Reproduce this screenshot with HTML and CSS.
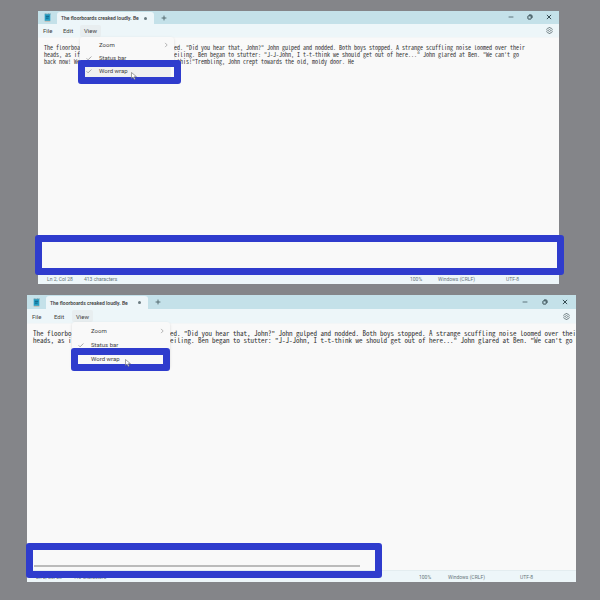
FILE: index.html
```html
<!DOCTYPE html>
<html lang="en">
<head>
<meta charset="utf-8">
<title>Notepad word wrap</title>
<link rel="stylesheet" href="styles.css">
</head>
<body>
<svg class="defs" aria-hidden="true">
  <symbol id="app" viewBox="0 0 12 16"><path d="M1 2h10v12H1z" fill="#249fc4"/><path d="M2 0v3M5 0v3M8 0v3M10.500 0v3" stroke="#5b8796" stroke-width="1"/><path d="M3 6h6M3 9h5" stroke="#126c91" stroke-width="2"/><path d="M1 14h10v1H1z" fill="#c59a83"/></symbol>
  <symbol id="plus" viewBox="0 0 10 10"><path d="M5 1v8M1 5h8" stroke="#4c6268" stroke-width="1.500"/></symbol>
  <symbol id="min" viewBox="0 0 10 10"><path d="M1 5h8" stroke="#526a71" stroke-width="1.500"/></symbol>
  <symbol id="restore" viewBox="0 0 10 10"><rect x="1.500" y="3" width="5.500" height="5.500" rx="1" fill="none" stroke="#263b42" stroke-width="1.500"/><path d="M3.500 1.500h3q2 0 2 2v3" fill="none" stroke="#263b42" stroke-width="1.500"/></symbol>
  <symbol id="close" viewBox="0 0 10 10"><path d="M1.500 1.500l7 7M8.500 1.500l-7 7" stroke="#263b42" stroke-width="1.500"/></symbol>
  <symbol id="gear" viewBox="0 0 14 14"><path d="M5.500 1h3l.7 1.800 1.900-.2 1.500 2.600L11.400 7l1.200 1.800-1.500 2.600-1.900-.2L8.500 13h-3l-.7-1.800-1.900.2-1.500-2.600L2.600 7 1.400 5.200l1.500-2.600 1.900.2z" fill="none" stroke="#59696e" stroke-width="1.400"/><circle cx="7" cy="7" r="2" fill="none" stroke="#59696e" stroke-width="1.300"/></symbol>
  <symbol id="check" viewBox="0 0 10 10"><path d="M1 5.500l2.500 2.500L9 2.500" fill="none" stroke="#909090" stroke-width="1.300"/></symbol>
  <symbol id="chevron" viewBox="0 0 10 10"><path d="M3.500 1.500l3.500 3.500-3.500 3.500" fill="none" stroke="#a0a0a0" stroke-width="1.300"/></symbol>
  <symbol id="cursor" viewBox="0 0 12 16"><path d="M1 1v12l3-3 2.500 5 2-1L6.200 9.500H11z" fill="#fff" stroke="#666" stroke-width="1.200"/></symbol>
</svg>

<main>
  <section class="window wrapped">
    <header class="titlebar">
      <svg class="app"><use href="#app"/></svg>
      <button class="tab"><span>The floorboards creaked loudly. Be</span><i class="dot"></i></button>
      <button class="add" aria-label="New tab"><svg class="icon"><use href="#plus"/></svg></button>
      <div class="controls">
        <button aria-label="Minimize"><svg class="icon"><use href="#min"/></svg></button>
        <button aria-label="Restore"><svg class="icon"><use href="#restore"/></svg></button>
        <button aria-label="Close"><svg class="icon"><use href="#close"/></svg></button>
      </div>
    </header>
    <nav class="menubar">
      <button class="top">File</button>
      <button class="top">Edit</button>
      <div class="view">
        <button class="open">View</button>
        <div class="menu">
          <button><span></span><span>Zoom</span><svg class="icon"><use href="#chevron"/></svg></button>
          <button><svg class="icon"><use href="#check"/></svg><span>Status bar</span></button>
          <button class="current"><svg class="icon"><use href="#check"/></svg><span>Word wrap</span></button>
        </div>
      </div>
      <button class="settings" aria-label="Settings"><svg class="gear"><use href="#gear"/></svg></button>
    </nav>
    <div class="editor">
      <p><span>The floorboa</span><span>ed. "Did you hear that, John?" John gulped and nodded. Both boys stopped. A strange scuffling noise loomed over their</span></p>
      <p><span>heads, as if</span><span>eiling. Ben began to stutter: "J-J-John, I t-t-think we should get out of here..." John glared at Ben. "We can't go</span></p>
      <p><span>back now! We</span><span> this!"Trembling, John crept towards the old, moldy door. He</span></p>
    </div>
    <footer class="status"><span class="position">Ln 2, Col 28</span><span class="count">413 characters</span><span class="zoom">100%</span><span class="endings">Windows (CRLF)</span><span class="encoding">UTF-8</span></footer>
    <div class="mark item-mark"></div>
    <div class="mark bottom-mark"></div>
    <svg class="cursor"><use href="#cursor"/></svg>
  </section>

  <section class="window unwrapped">
    <header class="titlebar">
      <svg class="app"><use href="#app"/></svg>
      <button class="tab"><span>The floorboards creaked loudly. Be</span><i class="dot"></i></button>
      <button class="add" aria-label="New tab"><svg class="icon"><use href="#plus"/></svg></button>
      <div class="controls">
        <button aria-label="Minimize"><svg class="icon"><use href="#min"/></svg></button>
        <button aria-label="Restore"><svg class="icon"><use href="#restore"/></svg></button>
        <button aria-label="Close"><svg class="icon"><use href="#close"/></svg></button>
      </div>
    </header>
    <nav class="menubar">
      <button class="top">File</button>
      <button class="top">Edit</button>
      <div class="view">
        <button class="open">View</button>
        <div class="menu">
          <button><span></span><span>Zoom</span><svg class="icon"><use href="#chevron"/></svg></button>
          <button><svg class="icon"><use href="#check"/></svg><span>Status bar</span></button>
          <button><span></span><span>Word wrap</span></button>
        </div>
      </div>
      <button class="settings" aria-label="Settings"><svg class="gear"><use href="#gear"/></svg></button>
    </nav>
    <div class="editor">
      <p><span>The floorbo</span><span>ed. "Did you hear that, John?" John gulped and nodded. Both boys stopped. A strange scuffling noise loomed over their</span></p>
      <p><span>heads, as i</span><span>eiling. Ben began to stutter: "J-J-John, I t-t-think we should get out of here..." John glared at Ben. "We can't go ba</span></p>
      <div class="scrollbar"></div>
    </div>
    <footer class="status"><span class="position">Ln 2, Col 28</span><span class="count">413 characters</span><span class="zoom">100%</span><span class="endings">Windows (CRLF)</span><span class="encoding">UTF-8</span></footer>
    <div class="mark item-mark"></div>
    <div class="mark bottom-mark"></div>
    <svg class="cursor"><use href="#cursor"/></svg>
  </section>
</main>
</body>
</html>
```
FILE: styles.css
```css
* { box-sizing: border-box; }
body { margin: 0; background: #848589; color: #444; font-family: Roboto, sans-serif; font-size: 6px; }
button { font: inherit; color: inherit; background: none; border: 0; padding: 0; margin: 0; text-align: left; }
svg { display: block; flex: none; }
.defs { position: absolute; width: 0; height: 0; }
main { display: flex; flex-direction: column; gap: 11px; padding: 11px 0 18px; }
.window {
  --bar: 13px; --menu: 14px; --item: 13px; --lead: 130px;
  position: relative; margin: 0 41px 0 38px; background: #f9f9f9;
}
.unwrapped { --bar: 14px; --menu: 15px; --item: 14px; --lead: 137px; margin: 0 24px 0 27px; }

.icon { width: 6px; height: 6px; }
.app { width: 7px; height: 9px; margin: 0 6px; }
.titlebar { display: flex; align-items: center; height: var(--bar); background: #c4e1e9; }
.tab {
  display: flex; align-items: center; justify-content: space-between; align-self: flex-end;
  width: 97px; height: 12px; padding: 0 7px 0 4px; border-radius: 3px 3px 0 0; background: #edf6f9;
  font: 600 5px Roboto, sans-serif; white-space: nowrap;
}
.unwrapped .tab { width: 102px; height: 13px; }
.dot { width: 3px; height: 3px; border-radius: 2px; background: #6b7b80; }
.add { margin-left: 7px; }
.controls { display: flex; gap: 13px; margin-left: auto; padding: 0 7px 1px 0; }
.unwrapped .controls { gap: 14px; padding-right: 8px; }

.menubar { display: flex; align-items: center; height: var(--menu); background: #edf6f9; border-bottom: 1px solid #f3f6f7; }
.top { width: 20px; padding-left: 5px; }
.unwrapped .top { width: 22px; }
.view { position: relative; margin-left: 2px; }
.unwrapped .view { margin-left: 1px; }
.open { display: block; width: 21px; height: 12px; padding-left: 4px; border-radius: 2px; background: #e8eef0; }
.settings { margin-left: auto; padding-right: 6px; }
.gear { width: 7px; height: 7px; }

.menu {
  position: absolute; top: 12px; left: 0; z-index: 2; width: 94px; padding: 2px 3px;
  border-radius: 3px; background: #f9f9f9; box-shadow: 0 1px 3px #0002;
}
.unwrapped .menu { width: 98px; }
.menu button { display: grid; grid-template-columns: 6px 1fr 6px; gap: 7px; align-items: center; width: 100%; height: var(--item); padding: 0 2px 0 3px; line-height: 8px; }
.menu .current { background: #f0f0f0; }

.editor { display: flex; flex-direction: column; min-height: 236px; padding: 6px 0 0 6px; font: 6px/7px "Noto Sans Mono CJK JP", "Liberation Mono", monospace; color: #333; overflow: hidden; }
.unwrapped .editor { min-height: 246px; padding-bottom: 2px; font-size: 7px; }
.editor p { display: grid; grid-template-columns: var(--lead) 1fr; margin: 0; white-space: pre; }
.scrollbar { width: 60%; height: 2px; margin: auto 0 1px 1px; background: #bbb; }

.status { display: flex; align-items: center; height: 10px; padding: 0 0 2px 9px; background: #edf6f9; border-top: 1px solid #e3edf0; color: #68767b; font: 5px/6px Roboto, sans-serif; }
.unwrapped .status { height: 12px; padding-bottom: 0; }
.position { width: 37px; }
.count { margin-right: auto; }
.zoom { width: 28px; }
.endings { width: 68px; }
.encoding { width: 53px; }
.unwrapped .zoom { width: 29px; }
.unwrapped .endings { width: 72px; }
.unwrapped .encoding { width: 56px; }

.mark { position: absolute; z-index: 3; border: 7px solid #2f3ccd; border-radius: 3px; }
.item-mark { left: 40px; top: 49px; width: 103px; height: 24px; }
.bottom-mark { left: -3px; right: -5px; bottom: 9px; height: 40px; }
.unwrapped .item-mark { left: 44px; top: 53px; width: 99px; height: 23px; }
.unwrapped .bottom-mark { left: -1px; right: 194px; bottom: 4px; height: 35px; }
.cursor { position: absolute; z-index: 4; left: 93px; top: 61px; width: 6px; height: 8px; }
.unwrapped .cursor { left: 98px; top: 64px; }
```
